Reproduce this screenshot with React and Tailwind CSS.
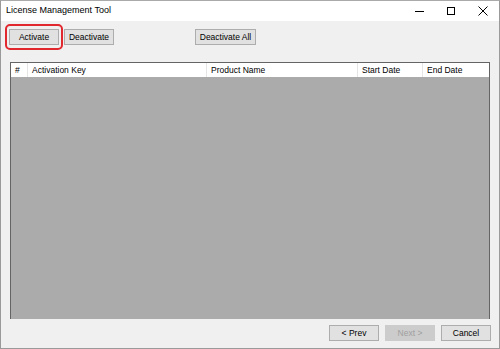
import React from 'react'

const font = { fontFamily: '"Liberation Sans", Arial, sans-serif' }

const Btn = ({ children, disabled, className = '' }) => (
  <div
    className={`h-[16px] w-[50px] flex items-center justify-center border whitespace-nowrap text-[8.5px] leading-none ${
      disabled ? 'border-[#cccccc] bg-[#cccccc] text-[#a0a0a0]' : 'border-[#adadad] bg-[#e1e1e1] text-black'
    } ${className}`}
  >
    {children}
  </div>
)

const cols = [
  { label: '#', w: 'w-[17px]' },
  { label: 'Activation Key', w: 'w-[179px]' },
  { label: 'Product Name', w: 'w-[151px]' },
  { label: 'Start Date', w: 'w-[65px]' },
  { label: 'End Date', w: 'flex-1' },
]

export default function App() {
  return (
    <div className="w-[500px] h-[349px] bg-[#f0f0f0] border border-[#9a9a9a] border-t-[#aaaaaa] flex flex-col text-black" style={font}>
      {/* title bar */}
      <div className="h-[20px] bg-white flex items-center shrink-0">
        <div className="pl-[5px] text-[9px] flex-1">License Management Tool</div>
        <div className="flex items-center h-full">
          <div className="w-[32px] h-full flex items-center justify-center">
            <div className="w-[9px] h-px bg-black" />
          </div>
          <div className="w-[32px] h-full flex items-center justify-center">
            <div className="w-[8px] h-[8px] border border-black" />
          </div>
          <div className="w-[32px] h-full flex items-center justify-center">
            <svg width="10" height="10" viewBox="0 0 10 10">
              <path d="M0.5 0.5 L9.5 9.5 M9.5 0.5 L0.5 9.5" stroke="black" strokeWidth="1" />
            </svg>
          </div>
        </div>
      </div>

      {/* toolbar */}
      <div className="flex items-center pl-[4px] pt-[4px] h-[28px] shrink-0">
        <div className="border-2 border-[#e0282e] rounded-[5px] px-[2px] py-[3px]">
          <Btn>Activate</Btn>
        </div>
        <Btn className="ml-[1px]">Deactivate</Btn>
        <Btn className="ml-[81px] w-[61px]">Deactivate All</Btn>
      </div>

      {/* table */}
      <div className="mt-[13px] mx-[9px] h-[257px] border border-[#646464] border-b-0 bg-[#ababab] flex flex-col">
        <div className="h-[14px] bg-white flex text-[8.5px] leading-none">
          {cols.map((c, i) => (
            <div key={i} className={`${c.w} h-full flex items-center pl-[4px] whitespace-nowrap ${i < cols.length - 1 ? 'border-r border-[#e5e5e5]' : ''}`}>
              {c.label}
            </div>
          ))}
        </div>
      </div>

      {/* footer */}
      <div className="flex justify-end items-center gap-[6px] pr-[8px] mt-[6px]">
        <Btn>{'< Prev'}</Btn>
        <Btn disabled>{'Next >'}</Btn>
        <Btn>Cancel</Btn>
      </div>
    </div>
  )
}
